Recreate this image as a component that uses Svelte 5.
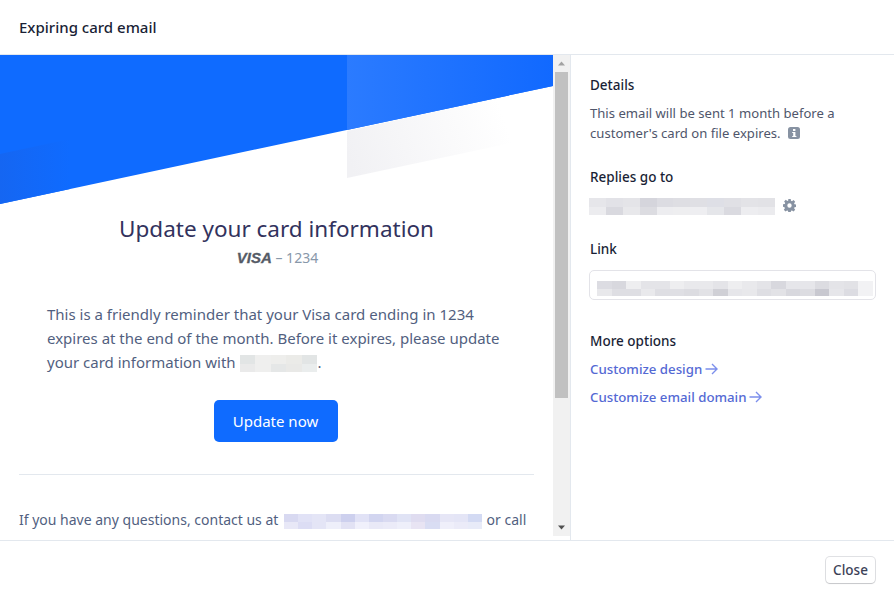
<script>
	const replyBlur = [
		['#e6e6ea', '#e2e2e7', '#e4e4e8', '#d5d5dc', '#dcdce2', '#dedee3', '#dfdfe4', '#dedfe6', '#e0e0e5', '#e3e3e7', '#e2e2e6'],
		['#ececef', '#d9d9df', '#e8e8eb', '#dcdce1', '#ededf0', '#eeeef0', '#eeeef1', '#e5e6ea', '#dadae0', '#ededf0', '#ebebee']
	]
	const linkBlur = [
		['#dcdce2', '#d8d8de', '#eeeef0', '#e4e4e8', '#e4e4e8', '#eeeef0', '#e9e9ec', '#e9e9ec', '#e4e4e8', '#eeeef0', '#e9e9ec', '#e4e4e8', '#d8d8de', '#e6e6ea', '#e6e6ea', '#dcdce1', '#e4e4e8', '#e2e2e6', '#f2f2f4'],
		['#e8e8eb', '#dedee3', '#dedee3', '#e9e9ec', '#dedee3', '#dfdfe4', '#dcdce1', '#e2e2e6', '#d0d0d6', '#e6e6ea', '#e8e8eb', '#dedee3', '#e2e2e6', '#d8d8de', '#dcdce1', '#c8c8d0', '#e6e6ea', '#dcdce2', '#f2f2f4']
	]
	const nameBlur = [
		['#e2e5e5', '#efefee', '#eeeeec', '#ebebe8', '#e2e5e5'],
		['#eaeaea', '#efefee', '#e5e7e7', '#e9e9e7', '#eaeded']
	]
	const mailBlur = [
		['#d8d9f1', '#e1e2f6', '#e4e5f6', '#dcddf2', '#cdd0ee', '#e1e2f6', '#d2d5f0', '#d9daf1', '#e0e3f5', '#dfdcf0', '#d9daf1', '#e6e6f6', '#e4e5f6', '#d3daf3'],
		['#e8e8f7', '#dcddf4', '#e4e5f6', '#eeeffa', '#e2e2f4', '#f0f0fb', '#e9e9f7', '#ebebf8', '#eeeffa', '#e8e4f3', '#d9ddf3', '#efeffa', '#ebebf8', '#e8ebf8']
	]
</script>

{#snippet blur(rows, w, h)}
	<span class="blur">
		{#each rows as row}
			<span class="blur-row">
				{#each row as c}
					<span style="width:{w}px;height:{h}px;background:{c}"></span>
				{/each}
			</span>
		{/each}
	</span>
{/snippet}

<div class="modal">
	<header>Expiring card email</header>

	<div class="body">
		<div class="preview">
			<div class="mail">
				<svg class="hero" width="553" height="150" viewBox="0 0 553 150">
					<defs>
						<linearGradient id="shine" x1="0" y1="0" x2="1" y2="0">
							<stop offset="0" stop-color="#2b7bff" />
							<stop offset="1" stop-color="#1169ff" />
						</linearGradient>
						<linearGradient id="shade" x1="347" y1="100" x2="500" y2="50" gradientUnits="userSpaceOnUse">
							<stop offset="0" stop-color="#f1f1f4" />
							<stop offset="1" stop-color="#ffffff" />
						</linearGradient>
						<linearGradient id="corner" x1="0" y1="0" x2="1" y2="0">
							<stop offset="0" stop-color="#1566f2" />
							<stop offset="1" stop-color="#0f6bff" />
						</linearGradient>
					</defs>
					<polygon points="347,123 553,79 553,31 347,76" fill="url(#shade)" />
					<polygon points="0,0 553,0 553,31 0,149" fill="#0f6bff" />
					<polygon points="347,0 553,0 553,31 347,75" fill="url(#shine)" />
					<polygon points="0,99 70,84 70,134 0,149" fill="url(#corner)" />
				</svg>

				<h1>Update your card information</h1>
				<div class="card">
					<span class="visa">VISA</span> – 1234
				</div>

				<p class="lead">
					This is a friendly reminder that your Visa card ending in 1234 expires at the end of the month. Before it expires, please update your card information with {@render blur(nameBlur, 15.6, 8.5)}.
				</p>

				<div class="cta">
					<span class="update">Update now</span>
				</div>

				<hr />

				<p class="foot">
					If you have any questions, contact us at {@render blur(mailBlur, 14.15, 7.5)} or call
				</p>
			</div>

			<div class="scrollbar">
				<svg class="arrow" width="17" height="17" viewBox="0 0 17 17"><path d="M5 10.5 8.5 6.5 12 10.5Z" fill="#a3a3a3" /></svg>
				<div class="track"><div class="thumb"></div></div>
				<svg class="arrow" width="17" height="17" viewBox="0 0 17 17"><path d="M5 6.5 12 6.5 8.5 10.5Z" fill="#505050" /></svg>
			</div>
		</div>

		<aside>
			<section class="details">
				<h2>Details</h2>
				<p>
					This email will be sent 1 month before a customer's card on file expires.
					<svg class="info" width="12" height="12" viewBox="0 0 12 12">
						<rect width="12" height="12" rx="2.5" fill="#8792a2" />
						<rect x="5" y="2" width="2.4" height="2" fill="#fff" />
						<path d="M4.2 5H7.4V9H8.4V10H4.2V9H5.2V6H4.2Z" fill="#fff" />
					</svg>
				</p>
			</section>

			<section class="replies">
				<h2>Replies go to</h2>
				<div class="reply-row">
					{@render blur(replyBlur, 16.9, 8.5)}
					<svg width="13" height="13" viewBox="0 0 13 13">
						<path fill="#8792a2" fill-rule="evenodd" d="M5.3 0h2.4l.3 1.8 1 .4L10.500 1.100l1.700 1.700-1.100 1.500.4 1 1.800.3v2.400l-1.800.3-.4 1 1.100 1.500-1.700 1.700-1.500-1.100-1 .4-.3 1.800H5.300l-.3-1.800-1-.4-1.500 1.100-1.700-1.700 1.100-1.500-.4-1L0 7.700V5.300l1.800-.3.4-1-1.100-1.500 1.700-1.700L4.300 1.900l1-.4ZM6.500 4.300a2.200 2.200 0 1 0 0 4.400 2.200 2.200 0 0 0 0-4.400Z" />
					</svg>
				</div>
			</section>

			<section class="link">
				<h2>Link</h2>
				<div class="field">{@render blur(linkBlur, 14.5, 7.5)}</div>
			</section>

			<section class="more">
				<h2>More options</h2>
				<a href="#design">Customize design <svg width="13" height="12" viewBox="0 0 13 12"><path d="M0.500 6H12M7 1l5 5-5 5" fill="none" stroke="#7c8fec" stroke-width="1.400" /></svg></a>
				<a href="#domain">Customize email domain <svg width="13" height="12" viewBox="0 0 13 12"><path d="M0.500 6H12M7 1l5 5-5 5" fill="none" stroke="#7c8fec" stroke-width="1.400" /></svg></a>
			</section>
		</aside>
	</div>

	<footer>
		<button>Close</button>
	</footer>
</div>

<style>
:global(body) {
	margin:0;
	background:#fff;
}

.modal {
	width:894px;
	height:599px;
	display:flex;
	flex-direction:column;
	font-family:"Noto Sans", sans-serif;
	color:#1a1f36;
	overflow:hidden;
}

header {
	height:54px;
	flex:none;
	padding:0 19px;
	line-height:55px;
	font-size:15px;
	font-weight:500;
	border-bottom:1px solid #e3e8ee;
}

.body {
	height:485px;
	flex:none;
	display:flex;
}

.preview {
	width:571px;
	flex:none;
	display:flex;
	box-sizing:border-box;
	border-right:1px solid #e3e8ee;
}

.mail {
	width:553px;
	flex:none;
	overflow:hidden;
}

.hero {
	display:block;
}

h1 {
	margin:10px 0 0;
	text-align:center;
	font-size:22.500px;
	font-weight:400;
	line-height:28px;
	color:#32325d;
}

.card {
	margin-top:5px;
	padding-left:2px;
	text-align:center;
	font-size:14px;
	line-height:20px;
	color:#8898aa;
}

.visa {
	font-family:"Liberation Sans", sans-serif;
	font-size:15px;
	font-weight:700;
	font-style:italic;
	color:#555b66;
	-webkit-text-stroke:.3px #555b66;
}

.lead {
	margin:34px 0 0;
	padding:0 47px;
	font-size:15px;
	line-height:24px;
	color:#525f7f;
}

.cta {
	margin-top:26px;
	padding-right:2px;
	text-align:center;
}

.update {
	display:inline-block;
	width:124px;
	height:42px;
	line-height:42px;
	border-radius:5px;
	background:#0f6bff;
	color:#fff;
	font-size:15px;
}

hr {
	margin:32px 19px 0;
	border:0;
	border-top:1px solid #e3e8ee;
}

.foot {
	margin:33px 0 0;
	padding:0 19px;
	font-size:14px;
	line-height:24px;
	white-space:nowrap;
	color:#525f7f;
}

.foot .blur {
	margin:0 1px 0 2px;
}

.blur {
	display:inline-block;
	vertical-align:-4px;
}

.blur-row {
	display:flex;
}

.blur-row span {
	display:block;
}

.scrollbar {
	width:17px;
	height:481px;
	flex:none;
	display:flex;
	flex-direction:column;
	background:#f1f1f1;
}

.arrow {
	display:block;
	flex:none;
}

.track {
	flex:1;
}

.thumb {
	height:326px;
	margin:0 2px;
	background:#c1c1c1;
}

aside {
	flex:1;
	min-width:0;
	box-sizing:border-box;
	padding:21px 18px 0 19px;
	font-size:13.100px;
}

h2 {
	margin:0;
	font-size:13.500px;
	line-height:18px;
	font-weight:500;
	color:#1a1f36;
}

.details p {
	margin:9px 0 0;
	line-height:20px;
	color:#4f566b;
}

.info {
	margin-left:4px;
	vertical-align:-1px;
}

.replies {
	margin-top:25px;
}

.reply-row {
	margin-top:12px;
	margin-left:-1px;
	display:flex;
	align-items:center;
	gap:8px;
}

.reply-row svg {
	margin-top:-3px;
}

.link {
	margin-top:25px;
}

.field {
	margin:12px 0 0 -1px;
	height:30px;
	box-sizing:border-box;
	border:1px solid #e3e3e8;
	border-radius:5px;
	padding:7px 0 0 7px;
	overflow:hidden;
}

.more {
	margin-top:32px;
}

.more a {
	display:block;
	margin-top:10px;
	line-height:18px;
	font-size:13.250px;
	color:#5469d4;
	font-weight:500;
	text-decoration:none;
}

.more svg {
	margin-left:-1px;
	vertical-align:-1px;
}

footer {
	flex:1;
	border-top:1px solid #e3e8ee;
	display:flex;
	justify-content:flex-end;
	padding:16px 19px 0 0;
}

button {
	width:49px;
	height:26px;
	padding:0;
	background:#fff;
	border:0;
	border-radius:4px;
	box-shadow:0 0 0 1px rgba(60, 66, 87, .16), 0 1px 1px rgba(0, 0, 0, .12);
	font:500 13.500px "Noto Sans", sans-serif;
	color:#3c4257;
}
</style>
